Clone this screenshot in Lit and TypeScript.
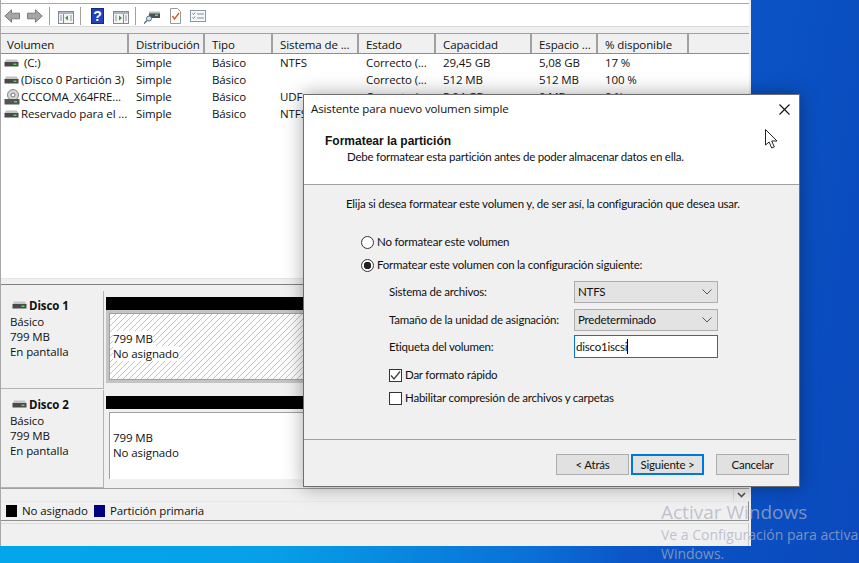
import { LitElement, css, html, svg } from "lit";
import { customElement } from "lit/decorators.js";

const columns = ["Volumen", "Distribución", "Tipo", "Sistema de ...", "Estado", "Capacidad", "Espacio ...", "% disponible", ""];

const rows = [
  { icon: "drive", name: "\u00a0(C:)", values: ["Simple", "Básico", "NTFS", "Correcto (...", "29,45 GB", "5,08 GB", "17 %"] },
  { icon: "drive", name: "(Disco 0 Partición 3)", values: ["Simple", "Básico", "", "Correcto (...", "512 MB", "512 MB", "100 %"] },
  { icon: "cd", name: "CCCOMA_X64FRE...", values: ["Simple", "Básico", "UDF", "Correcto (...", "5,04 GB", "0 MB", "0 %"] },
  { icon: "drive", name: "Reservado para el ...", values: ["Simple", "Básico", "NTFS"] },
];

const disks = [
  { name: "Disco 1", hatched: true },
  { name: "Disco 2", hatched: false },
];

const driveIcon = html`<svg class="drive" width="15" height="8" viewBox="0 0 15 8">
  <path d="M2 0.5h11l1.5 3h-14z" fill="#c4c4c4" />
  <rect x="0.5" y="3" width="14" height="4.5" fill="#4a4a4a" />
  <rect x="9.5" y="4.5" width="3" height="1.5" fill="#45e04a" />
</svg>`;

const cdIcon = html`<svg class="cd" width="16" height="16" viewBox="0 0 16 16">
  <circle cx="9" cy="6" r="5.5" fill="#d4d4d4" stroke="#8a8a8a" />
  <circle cx="9" cy="6" r="2" fill="#fff" stroke="#777" />
  <rect x="0.5" y="10" width="15" height="5.5" fill="#555" />
  <rect x="10" y="12" width="3" height="1.5" fill="#45e04a" />
</svg>`;

const hatch = html`<svg class="hatch" width="100%" height="100%">
  <defs>
    <pattern id="hatch-lines" width="6" height="6" patternUnits="userSpaceOnUse">
      <path d="M-1 1l2-2M0 6l6-6M5 7l2-2" stroke="#b4b4b4" stroke-width="0.8" />
    </pattern>
  </defs>
  <rect width="100%" height="100%" fill="url(#hatch-lines)" />
</svg>`;

const toolbarIcons = {
  back: svg`<path d="M0.8 8L7.5 1.8v3.4h8v5.6h-8v3.4z" fill="#a6a6a6" stroke="#7c7c7c" stroke-linejoin="round" />`,
  forward: svg`<path d="M15.2 8L8.5 1.8v3.4h-8v5.6h8v3.4z" fill="#a6a6a6" stroke="#7c7c7c" stroke-linejoin="round" />`,
  tree: svg`<rect x="0.5" y="3.5" width="15" height="12" fill="#f4f4f4" stroke="#7f8a96" />
    <rect x="1" y="4" width="14" height="2" fill="#aab6c4" />
    <path d="M5.5 6v9" stroke="#7f8a96" />
    <path d="M2 8h2M2 10h2M2 12h2M12 8h2M12 10h2M12 12h2" stroke="#8a95a0" />
    <path d="M10 7.5v5L7 10z" fill="#2f9e44" />`,
  help: svg`<rect x="0.5" y="0.5" width="12" height="15" fill="#2442bd" stroke="#14297f" />
    <text x="6.5" y="13" text-anchor="middle" font-family="Liberation Sans" font-weight="700" font-size="14" fill="#fff">?</text>`,
  show: svg`<rect x="0.5" y="3.5" width="15" height="12" fill="#f4f4f4" stroke="#7f8a96" />
    <rect x="1" y="4" width="14" height="2" fill="#aab6c4" />
    <path d="M10.5 6v9" stroke="#7f8a96" />
    <path d="M2 8h2M2 10h2M2 12h2M12 8h2M12 10h2M12 12h2" stroke="#8a95a0" />
    <path d="M6 7.5v5L9 10z" fill="#2f9e44" />`,
  search: svg`<rect x="5" y="5" width="11" height="5" fill="#4c5358" />
    <rect x="5" y="3.5" width="11" height="2" fill="#b9bec2" />
    <rect x="11" y="6.5" width="3" height="1.5" fill="#5ce05c" />
    <circle cx="5" cy="10.5" r="2.5" fill="#cfe4f2" stroke="#5c6b78" />
    <path d="M3 12.5l-3 3" stroke="#5c6b78" stroke-width="1.5" />`,
  doc: svg`<path d="M1.5 0.5h7l3 3v12h-10z" fill="#fff" stroke="#9a9a9a" />
    <path d="M3.5 8l2 3 4.5-6" fill="none" stroke="#e2562a" stroke-width="1.4" />`,
  list: svg`<rect x="0.5" y="2.5" width="15" height="11" fill="#f6f8fa" stroke="#8a98a6" />
    <path d="M2.5 5.5l1 1 1.5-2M2.5 9.5l1 1 1.5-2" fill="none" stroke="#3b82c4" />
    <path d="M7 6h7M7 10h7" stroke="#7a8a98" />`,
};

@customElement("app-root")
export class AppRoot extends LitElement {
  private _tool(name: keyof typeof toolbarIcons, width = 16, wide = false) {
    return html`<svg class="tool ${wide ? "wide" : ""}" width=${width} height="16" viewBox="0 0 ${width} 16">${toolbarIcons[name]}</svg>`;
  }

  private _disk(disk: { name: string; hatched: boolean }) {
    return html`
      <div class="disk">
        <div class="disk-label">
          <div class="disk-name">${driveIcon}<b>${disk.name}</b></div>
          <div>Básico</div>
          <div>799 MB</div>
          <div>En pantalla</div>
        </div>
        <div class="disk-map">
          <div class="black-bar"></div>
          <div class="partition ${disk.hatched ? "selected" : ""}">
            <div class="partition-inner ${disk.hatched ? "hatched" : ""}">
              ${disk.hatched ? hatch : ""}
              <div class="partition-text">799 MB</div>
              <div class="partition-text">No asignado</div>
            </div>
          </div>
        </div>
      </div>
    `;
  }

  private _mainWindow() {
    return html`
      <div class="main">
        <div class="top-strip"></div>
        <div class="toolbar">
          ${this._tool("back")}${this._tool("forward")}
          <span class="sep"></span>
          ${this._tool("tree")}
          <span class="sep"></span>
          ${this._tool("help", 13, true)}${this._tool("show", 16, true)}
          <span class="sep"></span>
          ${this._tool("search")}${this._tool("doc", 12, true)}${this._tool("list", 16, true)}
        </div>
        <div class="band"></div>
        <div class="list">
          <div class="list-row list-head">
            ${columns.map((c) => html`<div class="head-cell">${c}</div>`)}
          </div>
          ${rows.map(
            (r) => html`
              <div class="list-row">
                <div class="cell name-cell">
                  <span class="row-icon">${r.icon === "cd" ? cdIcon : driveIcon}</span>${r.name}
                </div>
                ${r.values.map((v) => html`<div class="cell">${v}</div>`)}
              </div>
            `
          )}
        </div>
        <div class="splitter"></div>
        <div class="disks">${disks.map((d) => this._disk(d))}</div>
        <div class="scroll-row">
          <span class="scroll-btn">
            <svg width="9" height="6" viewBox="0 0 9 6">
              <path d="M1 1l3.5 3.5L8 1" fill="none" stroke="#555" stroke-width="1.6" />
            </svg>
          </span>
        </div>
        <div class="legend">
          <span class="swatch black"></span><span>No asignado</span>
          <span class="swatch navy"></span><span>Partición primaria</span>
        </div>
        <div class="status"></div>
      </div>
    `;
  }

  private _dialog() {
    return html`
      <div class="dialog">
        <div class="title-row">
          <span>Asistente para nuevo volumen simple</span>
          <svg width="11" height="11" viewBox="0 0 11 11">
            <path d="M0.5 0.5l10 10M10.5 0.5l-10 10" stroke="#111" stroke-width="1.1" />
          </svg>
        </div>
        <div class="head">
          <b>Formatear la partición</b>
          <div class="head-sub">Debe formatear esta partición antes de poder almacenar datos en ella.</div>
        </div>
        <div class="body">
          <div class="lead">Elija si desea formatear este volumen y, de ser así, la configuración que desea usar.</div>
          <div class="radio first"><span class="radio-dot"></span>No formatear este volumen</div>
          <div class="radio"><span class="radio-dot on"></span>Formatear este volumen con la configuración siguiente:</div>
          <div class="form">
            <label>Sistema de archivos:</label>
            <div class="select">NTFS${this._selectChevron()}</div>
            <label>Tamaño de la unidad de asignación:</label>
            <div class="select">Predeterminado${this._selectChevron()}</div>
            <label>Etiqueta del volumen:</label>
            <div class="input">disco1iscsi<span class="caret"></span></div>
          </div>
          <div class="check first">
            <span class="box">
              <svg width="11" height="11" viewBox="0 0 11 11">
                <path d="M1 5.5l3 3.5L10 1.5" fill="none" stroke="#444" stroke-width="1.3" />
              </svg>
            </span>
            Dar formato rápido
          </div>
          <div class="check"><span class="box"></span>Habilitar compresión de archivos y carpetas</div>
        </div>
        <div class="footer">
          <button>&lt; Atrás</button>
          <button class="primary">Siguiente &gt;</button>
          <button class="cancel">Cancelar</button>
        </div>
      </div>
    `;
  }

  private _selectChevron() {
    return html`<svg width="10" height="6" viewBox="0 0 10 6">
      <path d="M0.5 0.5L5 5l4.5-4.5" fill="none" stroke="#555" />
    </svg>`;
  }

  render() {
    return html`
      ${this._mainWindow()} ${this._dialog()}
      <svg class="cursor" width="13" height="20" viewBox="0 0 13 20">
        <path d="M0.5 0.5v15.5l3.6-3 2.6 6 2.6-1.1-2.6-5.9h5.3z" fill="#fff" stroke="#222" />
      </svg>
      <div class="watermark">
        <div class="wm-title">Activar Windows</div>
        <div class="wm-sub">Ve a Configuración para activar</div>
        <div class="wm-sub">Windows.</div>
      </div>
    `;
  }

  static styles = css`
    :host {
      display: block;
      position: relative;
      width: 859px;
      height: 563px;
      overflow: hidden;
      background: linear-gradient(100deg, #00a8ec 0%, #07a0e8 38%, #0a6fd6 66%, #0b55c6 76%, #0a49bd 100%);
      font-family: "Open Sans", sans-serif;
      font-size: 11.5px;
      letter-spacing: -0.1px;
      color: #111;
    }
    .main {
      position: absolute;
      left: 0;
      top: 0;
      width: 751px;
      height: 546px;
      display: flex;
      flex-direction: column;
      box-sizing: border-box;
      background: #f0f0f0;
      border-left: 1px solid #a8a8a8;
      border-right: 2px solid #f0f0f0;
      line-height: 16px;
    }
    .top-strip {
      height: 3px;
      background: #fff;
      border-bottom: 1px solid #a9a9a9;
    }
    .toolbar {
      height: 22px;
      background: #fff;
      display: flex;
      align-items: center;
      box-sizing: content-box;
      padding-left: 3px;
      gap: 7px;
      border-bottom: 1px solid #d8d8d8;
    }
    .tool {
      display: block;
      flex: none;
      margin-top: 2px;
    }
    .tool.wide {
      margin-left: 2px;
    }
    .sep {
      width: 1px;
      height: 18px;
      background: #a0a0a0;
      margin: 2px 1px 0 -1px;
    }
    .band {
      height: 6px;
    }
    .list {
      height: 245px;
      background: #fff;
      border-top: 1px solid #a0a0a0;
    }
    .list-row {
      display: grid;
      grid-template-columns: 128px 76px 68px 86px 77px 96px 66px 91px 60px;
      height: 17px;
    }
    .list-head {
      height: 19px;
      background: #f0f0f0;
      border-bottom: 1px solid #8e8e8e;
    }
    .head-cell {
      padding-left: 7px;
      border-right: 2px solid #a0a0a0;
      line-height: 22px;
      white-space: nowrap;
      overflow: hidden;
    }
    .head-cell:first-child {
      padding-left: 6px;
    }
    .head-cell:last-child {
      border-right: none;
    }
    .cell {
      padding-left: 7px;
      line-height: 17px;
      white-space: nowrap;
      overflow: hidden;
    }
    .name-cell {
      display: flex;
      align-items: center;
      padding-left: 3px;
    }
    .row-icon {
      width: 17px;
      flex: none;
      display: flex;
      align-items: center;
    }
    .splitter {
      height: 7px;
      border-top: 1px solid #e4e4e4;
      border-bottom: 1px solid #808080;
      box-sizing: border-box;
      margin-top: -1px;
    }
    .disks {
      padding-top: 6px;
      height: 203px;
      box-sizing: border-box;
      display: flex;
      flex-direction: column;
      gap: 1px;
      overflow: hidden;
    }
    .disk {
      height: 98px;
      flex: none;
      display: flex;
    }
    .disk-label {
      width: 103px;
      flex: none;
      box-sizing: border-box;
      padding: 6px 0 0 9px;
      line-height: 15px;
      border-right: 1px solid #b4b4b4;
      border-bottom: 1px solid #b4b4b4;
    }
    .disk-name {
      display: flex;
      align-items: center;
      gap: 2px;
      padding-left: 2px;
      height: 16px;
      margin-bottom: 1px;
    }
    .disk-map {
      flex: 1;
      padding: 6px 0 0 2px;
    }
    .black-bar {
      height: 13px;
      background: #000;
    }
    .partition {
      height: 73px;
      box-sizing: border-box;
      padding: 3px;
    }
    .partition.selected {
      background: #c4c4c4;
    }
    .partition-inner {
      position: relative;
      height: 100%;
      box-sizing: border-box;
      padding: 17px 0 0 3px;
      background: #fff;
      border-left: 1px solid #a0a0a0;
      border-top: 1px solid #a0a0a0;
      line-height: 15px;
    }
    .partition-inner.hatched {
      border-bottom: 1px solid #a0a0a0;
    }
    .hatch {
      position: absolute;
      left: 0;
      top: 0;
    }
    .partition-text {
      position: relative;
      width: fit-content;
      background: #fff;
    }
    .scroll-row {
      height: 13px;
      display: flex;
      justify-content: flex-end;
      border-top: 1px solid #a0a0a0;
      box-sizing: border-box;
    }
    .scroll-btn {
      width: 15px;
      display: flex;
      align-items: center;
      justify-content: center;
      border-left: 1px solid #dcdcdc;
    }
    .legend {
      height: 18px;
      display: flex;
      align-items: center;
      padding-left: 5px;
      border-top: 1px solid #e8e8e8;
      border-bottom: 1px solid #8e8e8e;
      border-right: 1px solid #8e8e8e;
      box-sizing: content-box;
    }
    .swatch {
      width: 11px;
      height: 12px;
      margin-right: 5px;
    }
    .swatch.black {
      background: #000;
    }
    .swatch.navy {
      background: #000080;
      margin-left: 6px;
    }
    .status {
      flex: 1;
      border-top: 1px solid #dcdcdc;
      border-right: 1px solid #c8c8c8;
      margin-top: 2px;
    }
    .dialog {
      position: absolute;
      left: 303px;
      top: 94px;
      width: 497px;
      height: 393px;
      box-sizing: border-box;
      display: flex;
      flex-direction: column;
      background: #f0f0f0;
      border: 1px solid #6e6e6e;
      box-shadow: 0 0 18px rgba(0, 0, 0, 0.35);
      font-family: "Lato", sans-serif;
      font-size: 11.5px;
      letter-spacing: -0.22px;
      line-height: 16px;
    }
    .title-row {
      height: 28px;
      flex: none;
      background: #fff;
      display: flex;
      align-items: center;
      justify-content: space-between;
      padding: 0 9px 0 7px;
      font-family: "Open Sans", sans-serif;
      letter-spacing: -0.1px;
    }
    .head {
      height: 62px;
      flex: none;
      box-sizing: border-box;
      background: #fff;
      padding: 10px 0 0 21px;
      border-bottom: 1px solid #a0a0a0;
    }
    .head b {
      font-family: "Liberation Sans", sans-serif;
      font-size: 12px;
      letter-spacing: 0;
    }
    .head-sub {
      padding-left: 22px;
    }
    .body {
      flex: 1;
      box-sizing: border-box;
      padding: 11px 0 0 42px;
      border-bottom: 1px solid #a0a0a0;
      margin: 0 3px 0 0;
    }
    .radio {
      display: flex;
      align-items: center;
      gap: 3px;
      margin: 7px 0 0 15px;
      height: 16px;
    }
    .radio.first {
      margin-top: 22px;
    }
    .radio-dot {
      width: 13px;
      height: 13px;
      box-sizing: border-box;
      border: 1px solid #333;
      border-radius: 50%;
      background: #fff;
    }
    .radio-dot.on {
      background: radial-gradient(circle, #222 0 3.5px, #fff 4px);
    }
    .form {
      display: grid;
      grid-template-columns: 185px 144px;
      grid-template-rows: 22px 24px 23px;
      row-gap: 4px;
      align-items: end;
      margin: 8px 0 0 43px;
    }
    .form label {
      line-height: 22px;
      white-space: nowrap;
    }
    .select {
      height: 22px;
      box-sizing: border-box;
      display: flex;
      align-items: center;
      justify-content: space-between;
      padding: 0 5px 0 3px;
      background: #e3e3e3;
      border: 1px solid #adadad;
    }
    .input {
      height: 23px;
      box-sizing: border-box;
      display: flex;
      align-items: center;
      padding-left: 1px;
      background: #fff;
      border: 1px solid #0078d7;
    }
    .caret {
      width: 1px;
      height: 15px;
      background: #000;
    }
    .check {
      display: flex;
      align-items: center;
      gap: 3px;
      margin: 7px 0 0 43px;
      height: 16px;
    }
    .check.first {
      margin-top: 9px;
    }
    .box {
      width: 13px;
      height: 13px;
      box-sizing: border-box;
      border: 1px solid #333;
      background: #fff;
      display: flex;
      align-items: center;
      justify-content: center;
    }
    .footer {
      height: 46px;
      flex: none;
      box-sizing: border-box;
      display: flex;
      align-items: flex-start;
      gap: 2px;
      padding: 14px 0 0 252px;
    }
    button {
      width: 73px;
      height: 21px;
      padding: 0;
      font: inherit;
      letter-spacing: inherit;
      color: #111;
      background: #e1e1e1;
      border: 1px solid #adadad;
    }
    button.primary {
      border: 2px solid #0078d7;
    }
    button.cancel {
      margin-left: 10px;
    }
    .cursor {
      position: absolute;
      left: 765px;
      top: 129px;
    }
    .watermark {
      position: absolute;
      left: 661px;
      top: 500px;
      width: 198px;
      overflow: hidden;
      color: rgba(170, 175, 190, 0.72);
      white-space: nowrap;
      letter-spacing: 0;
    }
    .wm-title {
      font-size: 19px;
      line-height: 25px;
    }
    .wm-sub {
      font-size: 14px;
      line-height: 19px;
    }
  `;
}
